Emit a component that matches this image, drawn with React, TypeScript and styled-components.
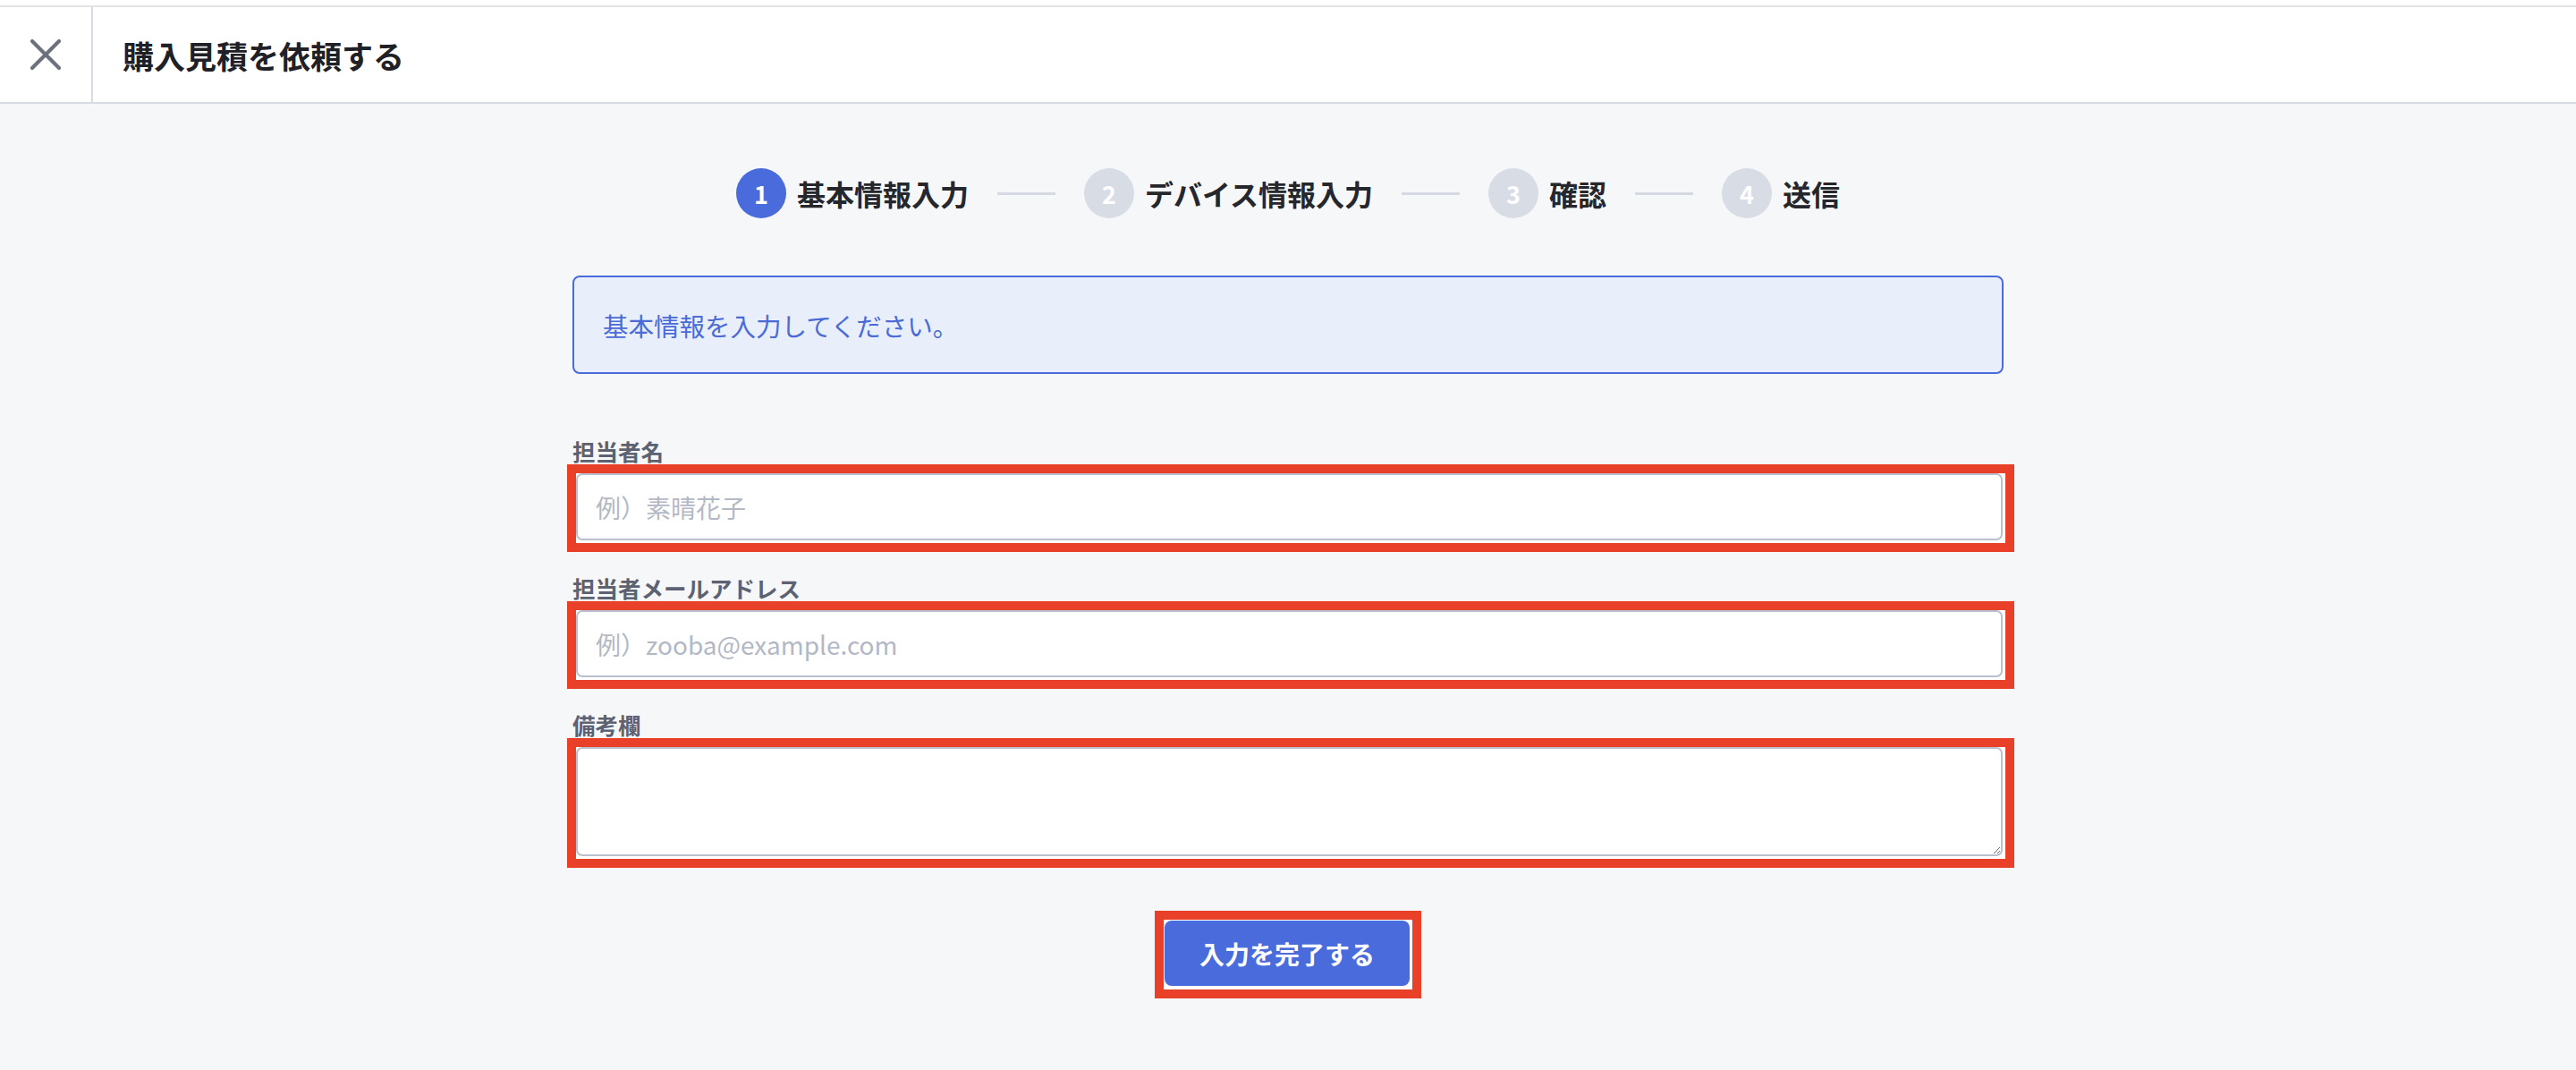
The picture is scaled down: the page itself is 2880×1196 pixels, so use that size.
import React from "react";
import styled, {createGlobalStyle} from "styled-components";

const GlobalStyle = createGlobalStyle`
    html, body {
        margin: 0;
        padding: 0;
        background: #f6f7f9;
        font-family: "Noto Sans CJK JP", "Noto Sans", sans-serif;
        color: #25272c;
    }

    * {
        box-sizing: border-box;
    }
`;

const Page = styled.div`
    min-height: 100vh;
    background: #f6f7f9;
`;

const TopStrip = styled.div`
    height: 6px;
    background: #ffffff;
`;

const Header = styled.header`
    display: flex;
    align-items: stretch;
    height: 110px;
    background: #ffffff;
    border-top: 2px solid #e2e2e2;
    border-bottom: 2px solid #d7dbe4;
`;

const CloseButton = styled.button`
    width: 104px;
    display: flex;
    align-items: center;
    justify-content: center;
    background: none;
    border: none;
    border-right: 2px solid #d7dbe4;
    padding: 0;
    cursor: pointer;
    color: #6b717d;
`;

const HeaderTitle = styled.h1`
    margin: 0;
    padding-left: 33px;
    display: flex;
    align-items: center;
    font-size: 35px;
    font-weight: 700;
    color: #1f2126;
`;

const Main = styled.main`
    padding-top: 72px;
`;

const Stepper = styled.div`
    display: flex;
    justify-content: center;
    align-items: center;
`;

const Step = styled.div`
    display: flex;
    align-items: center;
    gap: 12px;
`;

const StepCircle = styled.span<{ $active: boolean }>`
    width: 56px;
    height: 56px;
    border-radius: 50%;
    display: flex;
    align-items: center;
    justify-content: center;
    background: ${(p) => (p.$active ? "#4a6bdc" : "#d8dce5")};
    color: #ffffff;
    font-size: 27px;
    font-weight: 700;
`;

const StepLabel = styled.span`
    font-size: 32px;
    font-weight: 700;
    color: #25272c;
    line-height: 1;
`;

const Connector = styled.span`
    width: 65px;
    height: 3px;
    margin: 0 32px;
    background: #d5d9e2;
`;

const Container = styled.div`
    width: 1600px;
    margin: 64px auto 0;
`;

const Notice = styled.div`
    height: 110px;
    display: flex;
    align-items: center;
    padding: 0 32px;
    background: #e8eefa;
    border: 2px solid #4a6bdc;
    border-radius: 8px;
    color: #4a6bd6;
    font-size: 28.5px;
`;

const Form = styled.form`
    margin-top: 70px;
    display: flex;
    flex-direction: column;
`;

const Field = styled.div`
    display: flex;
    flex-direction: column;
    margin-bottom: 24px;
`;

const Label = styled.label`
    font-size: 25.5px;
    line-height: 31px;
    font-weight: 700;
    color: #5c6272;
`;

// red annotation frame drawn around the marked controls
const Highlight = styled.div<{ $inline?: boolean }>`
    border: 10px solid #e9402a;
    background: #ffffff;
    padding: ${(p) => (p.$inline ? "1px 3px 4px 1px" : "0 3px 3px 0")};
    margin: ${(p) => (p.$inline ? "0" : "0 -12px 0 -6px")};
    display: ${(p) => (p.$inline ? "inline-flex" : "flex")};
`;

const TextInput = styled.input`
    width: 100%;
    height: 75px;
    padding: 0 20px;
    border: 2px solid #b9bfcc;
    border-radius: 7px;
    background: #ffffff;
    font-family: inherit;
    font-size: 28px;
    color: #25272c;
    outline: none;

    &::placeholder {
        color: #b2b8c5;
    }
`;

const TextArea = styled.textarea`
    width: 100%;
    height: 122px;
    padding: 16px 20px;
    border: 2px solid #b9bfcc;
    border-radius: 7px;
    background: #ffffff;
    font-family: inherit;
    font-size: 28px;
    outline: none;
    display: block;
`;

const Actions = styled.div`
    display: flex;
    justify-content: center;
    margin-top: 24px;
`;

const SubmitButton = styled.button`
    height: 73px;
    padding: 0 39px;
    border: none;
    border-radius: 8px;
    background: #4a6bdc;
    color: #ffffff;
    font-family: inherit;
    font-size: 28px;
    font-weight: 700;
    cursor: pointer;
`;

const steps = ["基本情報入力", "デバイス情報入力", "確認", "送信"];

function CloseIcon() {
    return (
        <svg width="36" height="36" viewBox="0 0 36 36" fill="none">
            <path d="M3 3L33 33M33 3L3 33" stroke="currentColor" strokeWidth="4.2" strokeLinecap="round"/>
        </svg>
    );
}

function App() {
    return (
        <Page>
            <GlobalStyle/>
            <TopStrip/>
            <Header>
                <CloseButton aria-label="閉じる">
                    <CloseIcon/>
                </CloseButton>
                <HeaderTitle>購入見積を依頼する</HeaderTitle>
            </Header>
            <Main>
                <Stepper>
                    {steps.map((label, i) => (
                        <React.Fragment key={label}>
                            {i > 0 && <Connector/>}
                            <Step>
                                <StepCircle $active={i === 0}>{i + 1}</StepCircle>
                                <StepLabel>{label}</StepLabel>
                            </Step>
                        </React.Fragment>
                    ))}
                </Stepper>
                <Container>
                    <Notice>基本情報を入力してください。</Notice>
                    <Form onSubmit={(e) => e.preventDefault()}>
                        <Field>
                            <Label htmlFor="name">担当者名</Label>
                            <Highlight>
                                <TextInput id="name" placeholder="例）素晴花子"/>
                            </Highlight>
                        </Field>
                        <Field>
                            <Label htmlFor="email">担当者メールアドレス</Label>
                            <Highlight>
                                <TextInput id="email" type="email" placeholder="例）zooba@example.com"/>
                            </Highlight>
                        </Field>
                        <Field>
                            <Label htmlFor="note">備考欄</Label>
                            <Highlight>
                                <TextArea id="note"/>
                            </Highlight>
                        </Field>
                        <Actions>
                            <Highlight $inline>
                                <SubmitButton type="submit">入力を完了する</SubmitButton>
                            </Highlight>
                        </Actions>
                    </Form>
                </Container>
            </Main>
        </Page>
    );
}

export default App;
